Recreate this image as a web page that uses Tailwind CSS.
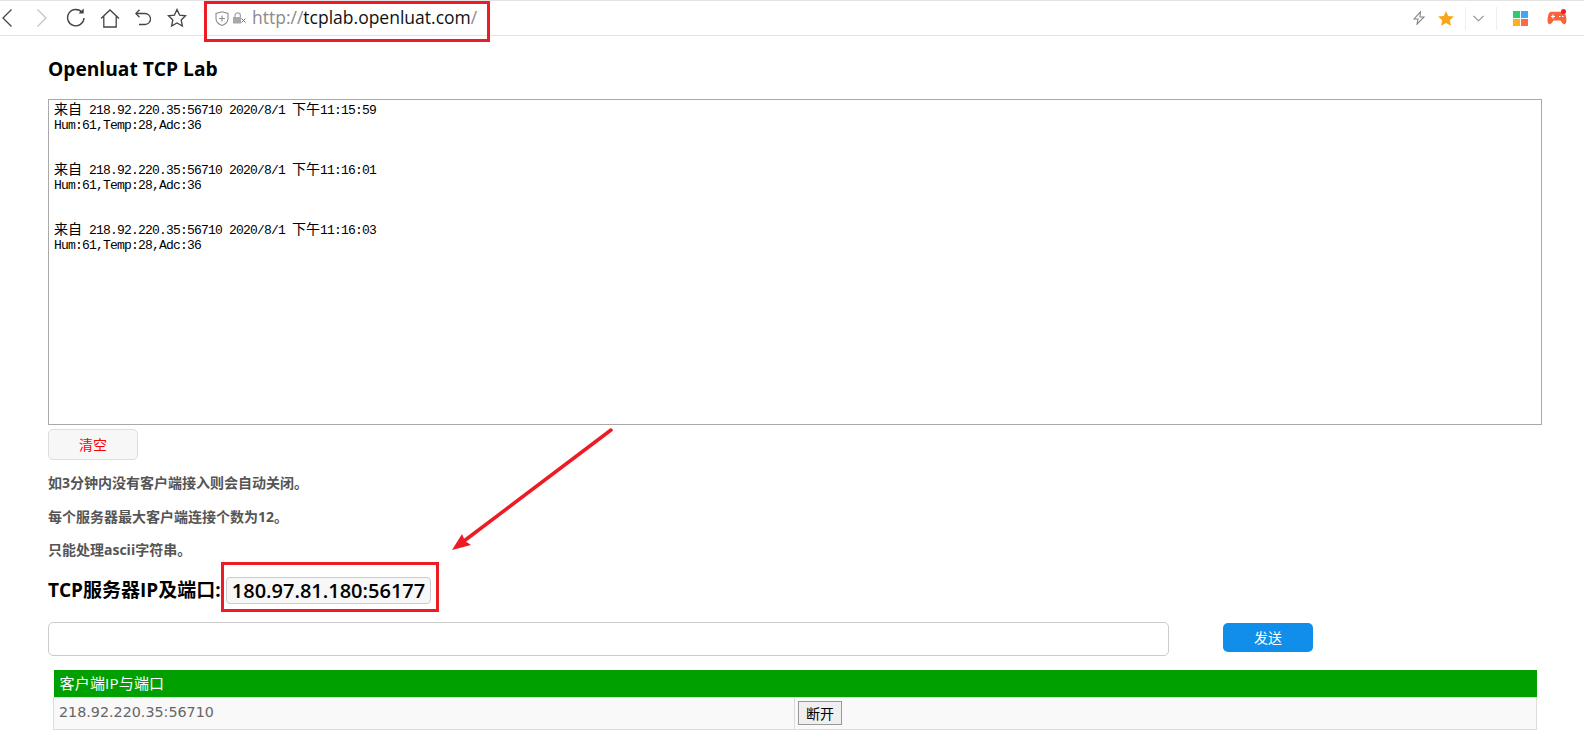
<!DOCTYPE html>
<html lang="en">

<head>
    <meta charset="UTF-8">
    <meta name="viewport" content="width=device-width, initial-scale=1.0">
    <title>Openluat TCP Lab</title>
    <script src="https://cdn.jsdelivr.net/npm/@tailwindcss/browser@4"></script>
</head>

<body class="relative h-[731px] overflow-hidden bg-white font-['Open_Sans','Noto_Sans_CJK_SC',sans-serif]">
    <!-- browser toolbar -->
    <header class="flex h-[36px] items-center border-t border-b border-[#e3e3e3] text-[#333]">
        <svg class="ml-[2px] h-[18px] w-[10px]" viewBox="0 0 10 18" fill="none" stroke="#444" stroke-width="1.3"><path d="M9.5 .5 1 9l8.5 8.5" /></svg>
        <svg class="ml-[25px] h-[18px] w-[10px]" viewBox="0 0 10 18" fill="none" stroke="#c4c4c4" stroke-width="1.3"><path d="M.5 .5 9 9 .5 17.5" /></svg>
        <svg class="ml-[19px] h-[20px] w-[20px]" viewBox="0 0 20 20" fill="none" stroke="#444" stroke-width="1.4"><path d="M16.2 4.5A8.2 8.2 0 1 0 18 10" /><path d="M12.5 5.6h5.2V.6z" fill="#444" stroke="none" /></svg>
        <svg class="ml-[14px] h-[19px] w-[20px]" viewBox="0 0 20 19" fill="none" stroke="#444" stroke-width="1.3"><path d="M1 9.5 10 1l9 8.500M3.800 7.500V18h12.400V7.500" /></svg>
        <svg class="ml-[15px] h-[18px] w-[16px]" viewBox="0 0 16 18" fill="none" stroke="#444" stroke-width="1.3"><path d="M1 4.500h9a5.500 5.500 0 0 1 0 11H4" /><path d="M4.500 .8 .8 4.500l3.700 3.700" /></svg>
        <svg class="ml-[16px] h-[20px] w-[20px]" viewBox="0 0 20 20" fill="none" stroke="#444" stroke-width="1.3"><path d="m10 1.500 2.600 5.600 6 .7-4.400 4.200 1.200 6L10 15l-5.400 3 1.200-6L1.400 7.800l6-.7z" /></svg>
        <svg class="ml-[28px] h-[15px] w-[14px]" viewBox="0 0 14 15" fill="none" stroke="#8d8d8d" stroke-width="1.1"><path d="M7 .7 13 2.500v5c0 3.300-2.500 5.700-6 6.900-3.500-1.200-6-3.600-6-6.900v-5zM7 4.500v6M4 7.500h6" /></svg>
        <svg class="ml-[4px] h-[12px] w-[13px]" viewBox="0 0 13 12" fill="none"><path d="M2 5V3.500a2.700 2.700 0 0 1 5.400 0V5" stroke="#a8a8a8" stroke-width="1.300" /><rect x="0" y="5" width="8" height="6.500" fill="#a8a8a8" /><path d="m8.500 6.500 4 4m0-4-4 4" stroke="#e0403c" stroke-width="1" /></svg>
        <div class="ml-[6px] text-[17.500px] leading-none text-[#8a8a8a]">http://<span class="text-[#111]">tcplab.openluat.com</span>/</div>

        <svg class="ml-auto h-[14px] w-[12px]" viewBox="0 0 12 14" fill="none" stroke="#858585" stroke-width="1.100"><path d="M7.500 .8 1 8h4l-1 5.200L11 6H7z" /></svg>
        <svg class="ml-[13px] h-[15px] w-[16px]" viewBox="0 0 16 15" fill="#f9a61a"><path d="m8 0 2.300 5 5.700.6-4.200 3.700 1.200 5.500L8 12l-5 2.800 1.200-5.500L0 5.600 5.700 5z" /></svg>
        <div class="ml-[11px] h-[23px] w-px bg-[#eee]"></div>
        <svg class="ml-[7px] h-[7px] w-[11px]" viewBox="0 0 11 7" fill="none" stroke="#8d8d8d" stroke-width="1.100"><path d="m.5 .8 5 5 5-5" /></svg>
        <div class="ml-[12px] h-[23px] w-px bg-[#eee]"></div>
        <div class="ml-[16px] grid h-[15px] w-[15px] grid-cols-2 gap-px">
            <span class="bg-[#2ecc71]"></span><span class="bg-[#3fa7f5]"></span>
            <span class="bg-[#fdb022]"></span><span class="bg-[#fb6a45]"></span>
        </div>
        <svg class="mr-[17px] ml-[19px] h-[18px] w-[20px]" viewBox="0 0 20 18"><path d="M5 2.800h9.500c2.800 0 4 2 4.600 5 .6 3.200.6 7-1.500 7.400-1.900.3-2.900-2.200-4.100-3.700H6.500c-1.200 1.500-2.200 4-4.100 3.700C.3 14.800.3 11 .9 7.800 1.500 4.800 2.200 2.800 5 2.800z" fill="#f9623a" /><path d="M4 7.500h4M6 5.500v4M12 7.500h1.500M15 7.500h1.500" stroke="#fff" stroke-width="1.200" /><circle cx="16.500" cy="2.500" r="2.500" fill="#f01c2c" /></svg>
    </header>

    <main class="pr-[42px] pl-[48px]">
        <h1 class="mt-[18px] text-[19.200px] leading-[30px] font-bold text-black">Openluat TCP Lab</h1>

        <div class="mt-[15px] h-[326px] border border-[#a9a9a9] pt-[1px] pl-[5px] text-[14px] leading-[15px] text-black [&_b]:font-['Liberation_Mono',monospace] [&_b]:text-[13px] [&_b]:font-normal [&_b]:tracking-[-0.8px] font-['Noto_Sans_CJK_SC',sans-serif]">
            <p class="h-[15px] whitespace-pre">来自<b> 218.92.220.35:56710 2020/8/1 </b>下午<b>11:15:59</b></p>
            <p class="h-[15px]"><b>Hum:61,Temp:28,Adc:36</b></p>
            <p class="mt-[30px] h-[15px] whitespace-pre">来自<b> 218.92.220.35:56710 2020/8/1 </b>下午<b>11:16:01</b></p>
            <p class="h-[15px]"><b>Hum:61,Temp:28,Adc:36</b></p>
            <p class="mt-[30px] h-[15px] whitespace-pre">来自<b> 218.92.220.35:56710 2020/8/1 </b>下午<b>11:16:03</b></p>
            <p class="h-[15px]"><b>Hum:61,Temp:28,Adc:36</b></p>
        </div>

        <button class="mt-[4px] block h-[31px] w-[90px] rounded-[5px] border border-[#ddd] bg-[#f7f7f7] text-[14px] text-[#f00]">清空</button>

        <div class="mt-[13px] space-y-[13.500px] text-[14px] leading-[20px] font-bold text-[#555]">
            <p>如3分钟内没有客户端接入则会自动关闭。</p>
            <p>每个服务器最大客户端连接个数为12。</p>
            <p>只能处理ascii字符串。</p>
        </div>

        <div class="mt-[17px] flex h-[27px] items-center text-[19px] font-bold text-black">
            <span class="w-[173px] whitespace-nowrap">TCP服务器IP及端口:</span>
            <code class="ml-[5px] flex h-[27px] w-[205px] items-center justify-center rounded-[4px] border border-[#ccc] bg-[#f7f7f7] font-['Open_Sans',sans-serif] text-[20px] font-semibold">180.97.81.180:56177</code>
        </div>

        <div class="mt-[18px] flex items-start">
            <input type="text" class="h-[34px] w-[1121px] rounded-[5px] border border-[#ccc] bg-white">
            <button class="mt-[1px] ml-[54px] h-[29px] w-[90px] rounded-[5px] bg-[#108ee9] text-[14px] text-white">发送</button>
        </div>

        <table class="mt-[14px] ml-[5px] w-[1484px] border-collapse text-[14px]">
            <thead>
                <tr class="h-[27px] bg-[#00a000] text-left text-white">
                    <th colspan="2" class="px-[6px] text-[15px] font-normal tracking-[0.2px]">客户端IP与端口</th>
                </tr>
            </thead>
            <tbody>
                <tr class="h-[32px] border border-[#ddd] bg-[#f9f9f9]">
                    <td class="w-[741px] border-r border-[#ddd] px-[5px] font-['DejaVu_Sans',sans-serif] text-[14.300px] text-[#666]">218.92.220.35:56710</td>
                    <td class="px-[3px]"><button class="block h-[24px] w-[44px] border border-[#999] bg-[#efefef] text-[14px] text-black">断开</button></td>
                </tr>
            </tbody>
        </table>
    </main>

    <!-- red annotations drawn over the screenshot -->
    <div class="absolute top-[1px] left-[204px] h-[41px] w-[286px] border-[3px] border-[#ed1c24]"></div>
    <div class="absolute top-[562px] left-[221px] h-[50px] w-[218px] border-[3px] border-[#ed1c24]"></div>
    <svg class="absolute top-0 left-0 h-[731px] w-[1584px]" viewBox="0 0 1584 731" fill="none">
        <path d="M611 430 464 541" stroke="#ed1c24" stroke-width="3.500" stroke-linecap="round" />
        <path d="M452 550 462 534 465 541 471 545z" fill="#ed1c24" />
    </svg>
</body>

</html>
